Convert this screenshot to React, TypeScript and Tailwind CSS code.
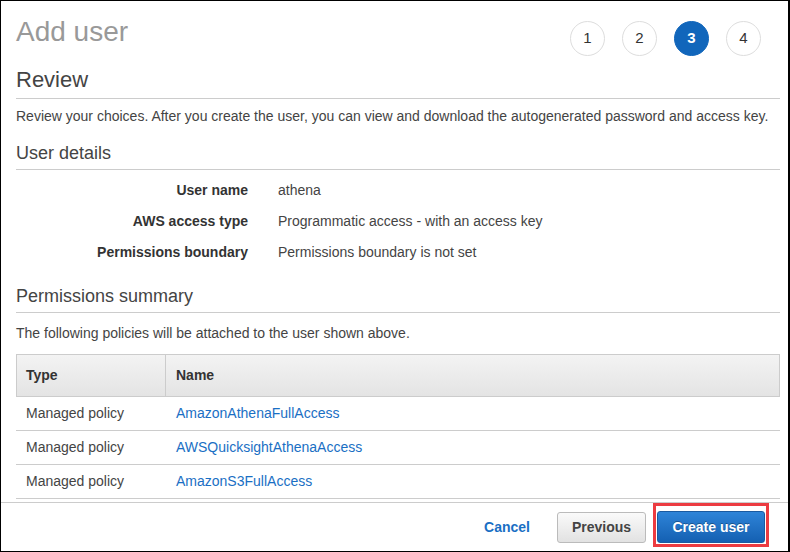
import React from 'react';

const STEPS = [1, 2, 3, 4];

const DETAILS = [
  { label: 'User name', value: 'athena' },
  { label: 'AWS access type', value: 'Programmatic access - with an access key' },
  { label: 'Permissions boundary', value: 'Permissions boundary is not set' },
];

const POLICIES = ['AmazonAthenaFullAccess', 'AWSQuicksightAthenaAccess', 'AmazonS3FullAccess'];

export default function App() {
  return (
    <div className="w-[790px] h-[552px] bg-white border-black border-t border-l border-b border-r-2 flex flex-col font-['Liberation_Sans',Arial,sans-serif] text-[14px] text-[#444]">
      <div className="flex-1 pl-[15px] pr-[8px]">
        {/* Header with wizard steps */}
        <div className="flex justify-between items-start pt-[15px]">
          <h1 className="text-[28px] leading-[32px] text-[#999]">Add user</h1>
          <div className="flex gap-[17px] mt-[5px] mr-[19px]">
            {STEPS.map((step) => (
              <div
                key={step}
                className={
                  step === 3
                    ? 'w-[35px] h-[35px] rounded-full bg-[#1166bb] border border-[#1166bb] flex items-center justify-center text-[15px] font-bold text-white'
                    : 'w-[35px] h-[35px] rounded-full bg-white border border-[#ddd] flex items-center justify-center text-[15px] text-[#333]'
                }
              >
                {step}
              </div>
            ))}
          </div>
        </div>

        {/* Review */}
        <h2 className="mt-[11px] text-[22px] leading-[26px] pb-[5px] border-b border-[#ccc]">Review</h2>
        <p className="mt-[7px] leading-[20px]">
          Review your choices. After you create the user, you can view and download the autogenerated password and access key.
        </p>

        {/* User details */}
        <h3 className="mt-[16px] text-[18px] leading-[22px] pb-[5px] border-b border-[#ccc]">User details</h3>
        <div className="mt-[5px] grid grid-cols-[232px_1fr] gap-x-[30px]">
          {DETAILS.map((row) => (
            <React.Fragment key={row.label}>
              <div className="text-right font-bold text-[#333] leading-[31px]">{row.label}</div>
              <div className="leading-[31px]">{row.value}</div>
            </React.Fragment>
          ))}
        </div>

        {/* Permissions summary */}
        <h3 className="mt-[17px] text-[18px] leading-[22px] pb-[5px] border-b border-[#ccc]">Permissions summary</h3>
        <p className="mt-[10px] leading-[20px]">The following policies will be attached to the user shown above.</p>

        <div className="mt-[11px]">
          <div className="flex h-[43px] border border-[#ccc] bg-gradient-to-b from-[#f3f3f3] to-[#e4e4e4] font-bold text-[#333]">
            <div className="w-[149px] pl-[9px] flex items-center border-r border-[#ccc]">Type</div>
            <div className="flex-1 pl-[10px] flex items-center">Name</div>
          </div>
          {POLICIES.map((name) => (
            <div key={name} className="flex h-[34px] items-center border-b border-[#ccc]">
              <div className="w-[150px] pl-[10px]">Managed policy</div>
              <div className="flex-1 pl-[10px] text-[#1a6fc4]">{name}</div>
            </div>
          ))}
        </div>
      </div>

      {/* Footer actions */}
      <div className="h-[49px] border-t border-[#ccc] flex justify-end items-start pr-[19px]">
        <button className="mt-[9px] h-[31px] font-bold text-[#1a6fc4] mr-[27px]">Cancel</button>
        <button className="mt-[9px] h-[31px] w-[89px] rounded-[3px] border border-[#bbb] bg-gradient-to-b from-[#fafafa] to-[#e2e2e2] font-bold text-[#444] mr-[7px]">
          Previous
        </button>
        <div className="border-[3px] border-[#ec3b41] pt-[5px] pb-[1px] px-[1px]">
          <button className="h-[32px] w-[108px] rounded-[3px] border border-[#1a5aa0] bg-gradient-to-b from-[#2e84d8] to-[#1460b2] font-bold text-white [text-shadow:0_-1px_0_rgba(0,0,0,0.3)]">
            Create user
          </button>
        </div>
      </div>
    </div>
  );
}
